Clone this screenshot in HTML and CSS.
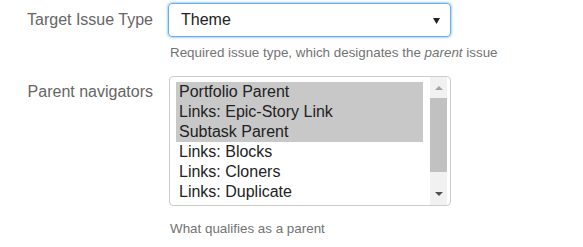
FILE: index.html
```html
<!DOCTYPE html>
<html lang="en">
<head>
<meta charset="utf-8">
<title>Parent settings</title>
<link rel="stylesheet" href="styles.css">
</head>
<body>
<form class="form">
  <label class="form-label form-label-select">Target Issue Type</label>
  <div class="field">
    <div class="select">
      <span class="select-value">Theme</span>
      <svg class="select-caret" width="7" height="6" viewBox="0 0 7 6"><polygon points="0,0 7,0 3.5,6" fill="#222"/></svg>
    </div>
    <p class="help help-first">Required issue type, which designates the <em>parent</em> issue</p>
  </div>

  <label class="form-label form-label-list">Parent navigators</label>
  <div class="field">
    <div class="listbox">
      <div class="options">
        <div class="option is-selected">Portfolio Parent</div>
        <div class="option is-selected">Links: Epic-Story Link</div>
        <div class="option is-selected">Subtask Parent</div>
        <div class="option">Links: Blocks</div>
        <div class="option">Links: Cloners</div>
        <div class="option">Links: Duplicate</div>
        <div class="option">Links: Relates</div>
      </div>
      <div class="scrollbar">
        <div class="sb-btn sb-up"><span class="tri tri-up"></span></div>
        <div class="sb-thumb"></div>
        <div class="sb-space"></div>
        <div class="sb-btn sb-down"><span class="tri tri-down"></span></div>
      </div>
    </div>
    <p class="help help-second">What qualifies as a parent</p>
  </div>
</form>
</body>
</html>
```

FILE: styles.css
```css
html, body {
  margin: 0;
  padding: 0;
  background: #fff;
}

body {
  font-family: "Liberation Sans", Arial, sans-serif;
  font-size: 16px;
  line-height: 20px;
  color: #333;
}

.form {
  display: grid;
  grid-template-columns: 153px 1fr;
  column-gap: 15px;
  row-gap: 13px;
  padding-top: 3px;
}

.form-label {
  text-align: right;
  color: #666;
  font-size: 16px;
  line-height: 20px;
}

.form-label-select {
  padding-top: 7px;
}

.form-label-list {
  padding-top: 6px;
}

.field {
  display: flex;
  flex-direction: column;
  align-items: flex-start;
}

.select {
  box-sizing: border-box;
  width: 283px;
  height: 34px;
  border: 1px solid #66afe9;
  border-radius: 4px;
  box-shadow: 0 0 2px 1px rgba(102, 175, 233, 0.55);
  padding: 0 10px 0 12px;
  display: flex;
  align-items: center;
  justify-content: space-between;
  color: #222;
}

.select-caret {
  display: block;
  margin-top: 1px;
}

.help {
  margin: 0;
  margin-left: 2px;
  font-size: 13.4px;
  line-height: 20px;
  color: #737373;
  white-space: nowrap;
}

.help-first {
  margin-top: 6px;
}

.help-second {
  margin-top: 13px;
}

.listbox {
  box-sizing: border-box;
  margin-left: 1px;
  width: 282px;
  height: 130px;
  border: 1px solid #ccc;
  border-radius: 4px;
  display: flex;
  padding-left: 6px;
  overflow: hidden;
}

.options {
  width: 247px;
  padding-top: 5px;
  overflow: hidden;
}

.option {
  height: 20px;
  line-height: 20px;
  padding-left: 3px;
  color: #222;
  white-space: nowrap;
}

.option.is-selected {
  background: #c8c8c8;
}

.scrollbar {
  width: 17px;
  margin-left: 7px;
  background: #f1f1f1;
  display: flex;
  flex-direction: column;
}

.sb-btn {
  display: flex;
  align-items: center;
  justify-content: center;
}

.sb-up {
  height: 21px;
}

.sb-down {
  height: 22px;
}

.sb-thumb {
  height: 74px;
  background: #c1c1c1;
}

.sb-space {
  flex: 1;
}

.tri {
  width: 0;
  height: 0;
  border-left: 4px solid transparent;
  border-right: 4px solid transparent;
}

.tri-up {
  border-bottom: 4px solid #a3a3a3;
}

.tri-down {
  border-top: 4px solid #505050;
}
```
